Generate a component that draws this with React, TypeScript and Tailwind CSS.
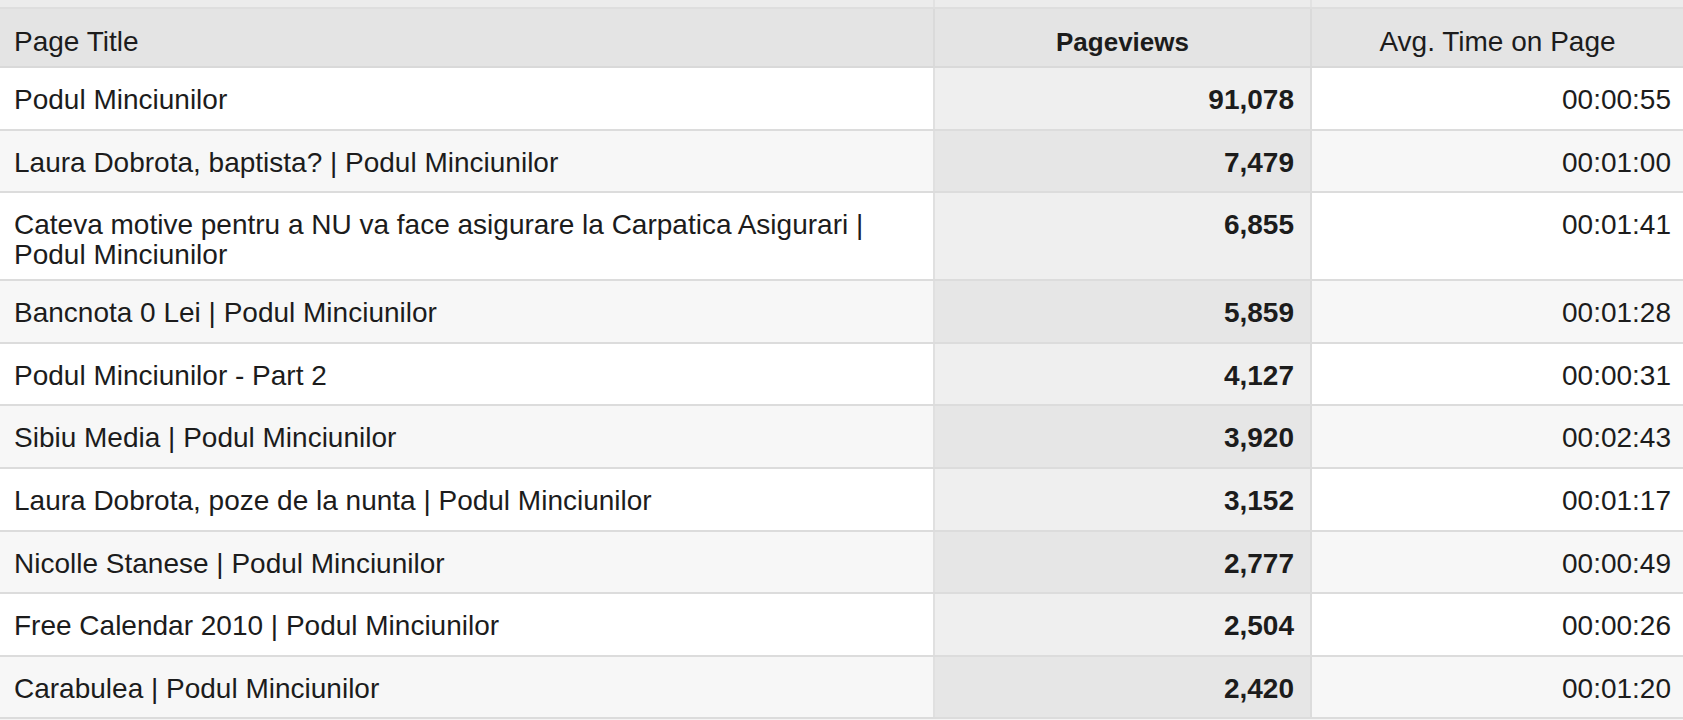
import React from "react";

const rows = [
  { title: "Podul Minciunilor", views: "91,078", time: "00:00:55" },
  { title: "Laura Dobrota, baptista? | Podul Minciunilor", views: "7,479", time: "00:01:00" },
  {
    title: "Cateva motive pentru a NU va face asigurare la Carpatica Asigurari | Podul Minciunilor",
    views: "6,855",
    time: "00:01:41",
  },
  { title: "Bancnota 0 Lei | Podul Minciunilor", views: "5,859", time: "00:01:28" },
  { title: "Podul Minciunilor - Part 2", views: "4,127", time: "00:00:31" },
  { title: "Sibiu Media | Podul Minciunilor", views: "3,920", time: "00:02:43" },
  { title: "Laura Dobrota, poze de la nunta | Podul Minciunilor", views: "3,152", time: "00:01:17" },
  { title: "Nicolle Stanese | Podul Minciunilor", views: "2,777", time: "00:00:49" },
  { title: "Free Calendar 2010 | Podul Minciunilor", views: "2,504", time: "00:00:26" },
  { title: "Carabulea | Podul Minciunilor", views: "2,420", time: "00:01:20" },
];

export default function App() {
  return (
    <div
      className="w-[1683px] h-[720px] overflow-hidden bg-[#f4f4f4] text-[#1c1c1c] text-[28px] leading-[30px]"
      style={{ fontFamily: '"Liberation Sans", Arial, sans-serif' }}
    >
      {/* strip above header */}
      <div className="grid grid-cols-[935px_377px_1fr] h-[9px] bg-[#ececec] border-b-2 border-[#dedede]">
        <div className="border-r-2 border-[#e2e2e2]" />
        <div className="border-r-2 border-[#e2e2e2]" />
        <div />
      </div>

      {/* header */}
      <div className="grid grid-cols-[935px_377px_1fr] bg-[#e4e4e4] border-b-2 border-[#d9d9d9]">
        <div className="border-r-2 border-[#dadada] pl-[14px] pt-[18px] h-[57px]">Page Title</div>
        <div className="border-r-2 border-[#dadada] pt-[18px] text-center font-bold text-[26px]">
          Pageviews
        </div>
        <div className="pt-[18px] text-center">Avg. Time on Page</div>
      </div>

      {rows.map((r, i) => {
        const odd = i % 2 === 1;
        return (
          <div
            key={r.title}
            className={`grid grid-cols-[935px_377px_1fr] border-b-2 border-[#dcdcdc] ${
              odd ? "bg-[#f7f7f7]" : "bg-white"
            }`}
          >
            <div className="border-r-2 border-[#e0e0e0] pl-[14px] pr-[30px] pt-[17px] pb-[9px] min-h-[60.6px]">
              {r.title}
            </div>
            <div
              className={`border-r-2 border-[#dcdcdc] pr-[16px] pt-[17px] text-right font-bold ${
                odd ? "bg-[#e6e6e6]" : "bg-[#efefef]"
              }`}
            >
              {r.views}
            </div>
            <div className="pr-[12px] pt-[17px] text-right">{r.time}</div>
          </div>
        );
      })}
    </div>
  );
}
